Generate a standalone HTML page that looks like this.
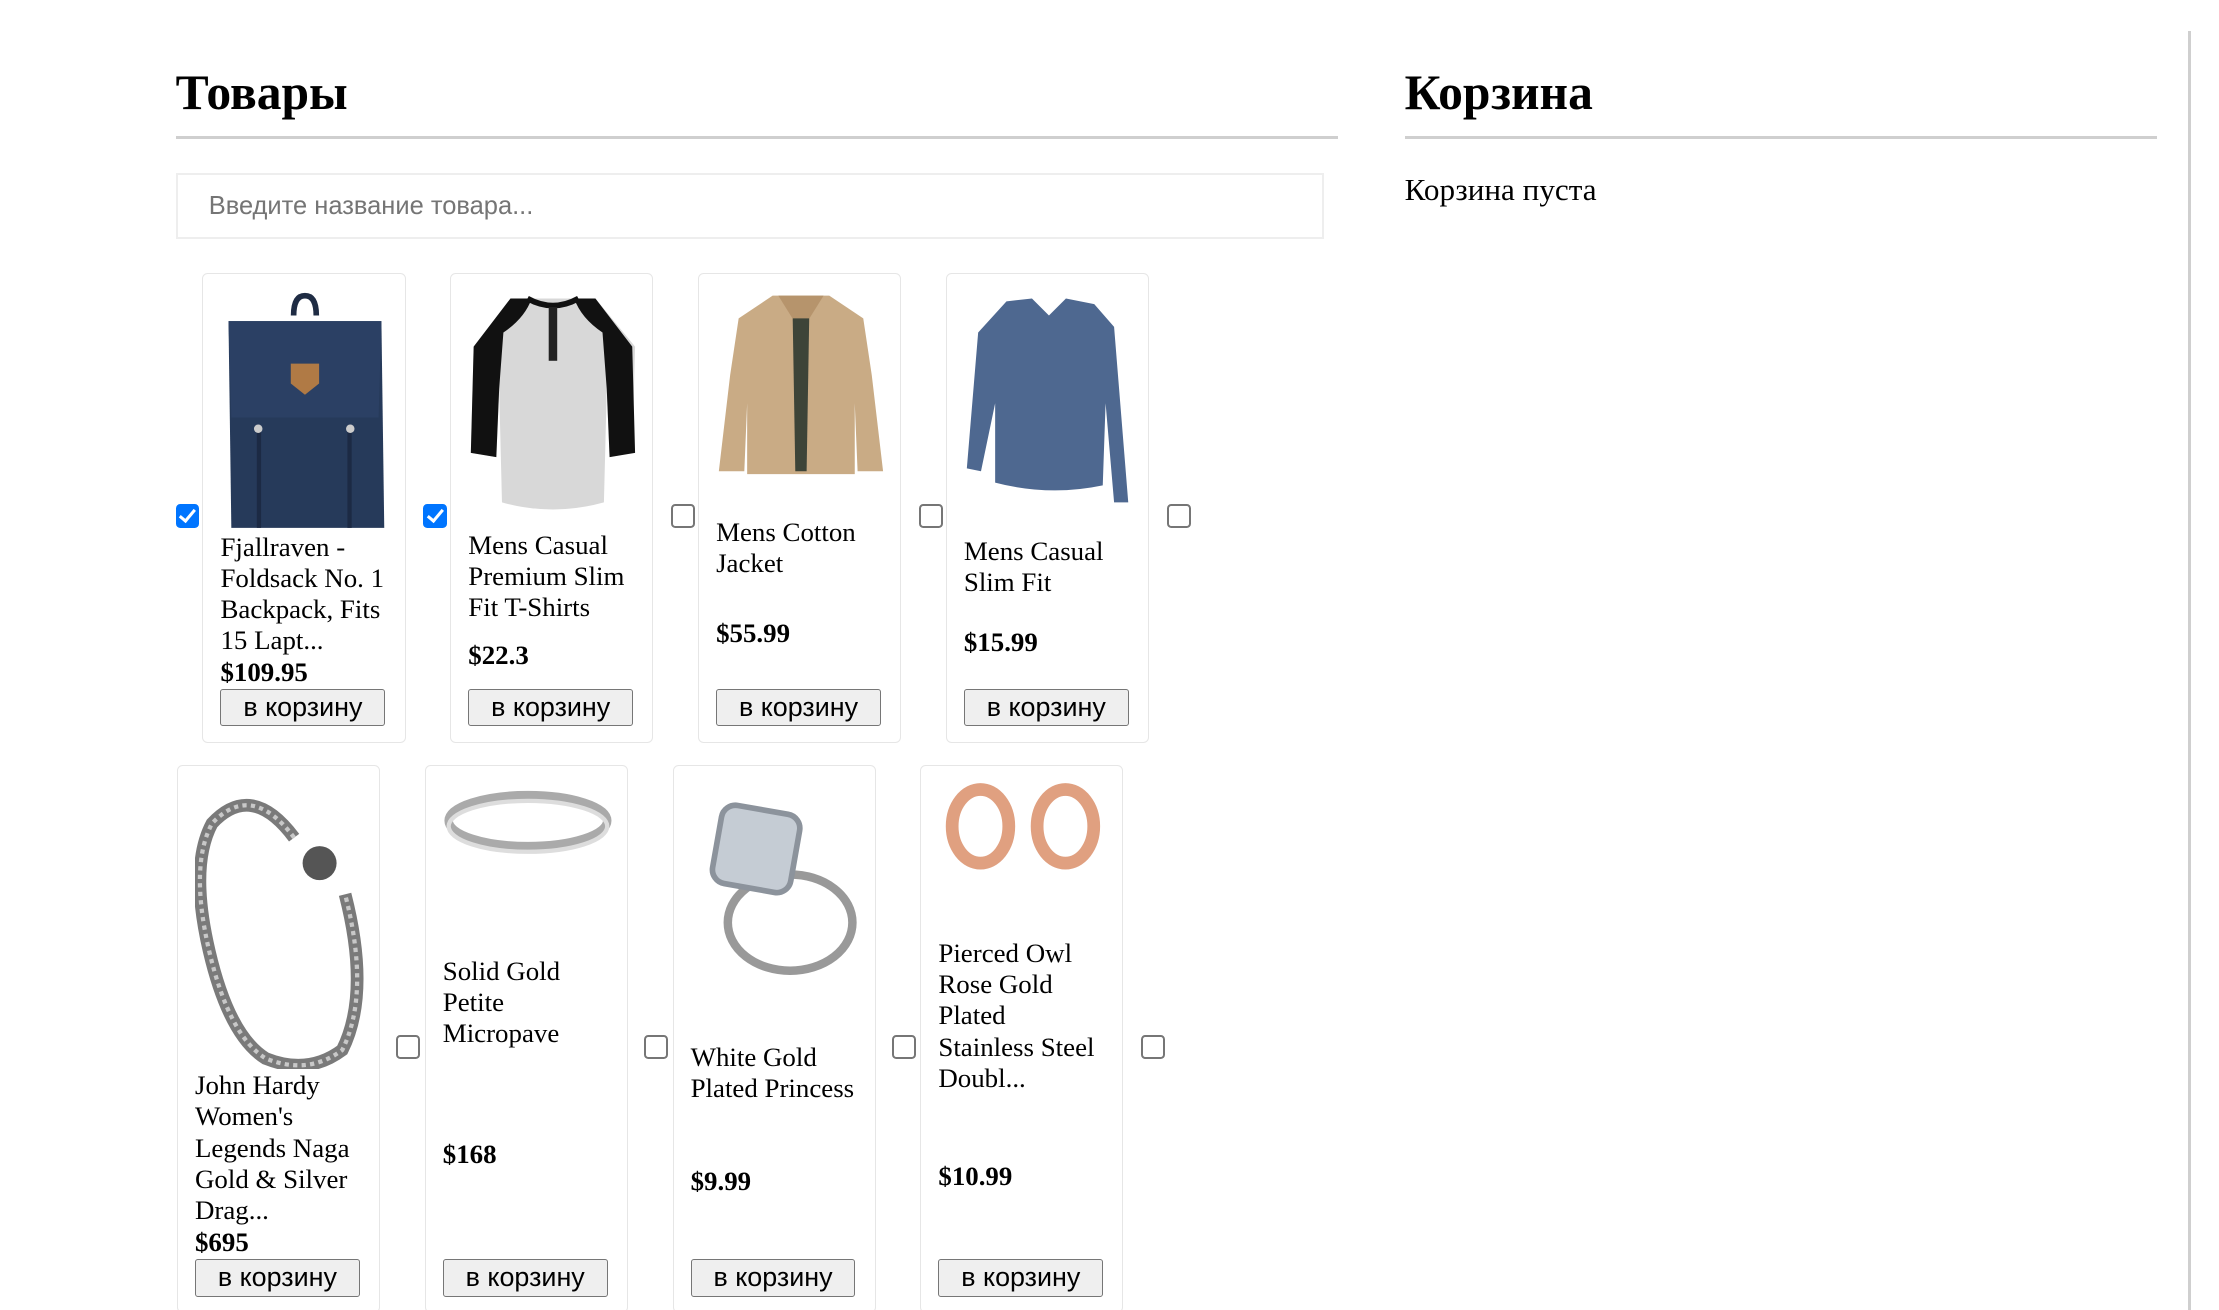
<!DOCTYPE html>
<html><head><meta charset="utf-8"><style>
html,body{margin:0;padding:0;background:#fff;overflow:hidden}
#w{zoom:1.416;position:relative;width:1568px;height:925px;font-family:"Liberation Serif",serif;color:#000}
.a{position:absolute}
h1{position:absolute;margin:0;font-size:35px;font-weight:bold;line-height:40px}
.hr{position:absolute;height:2px;background:#cfcfcf}
.search{left:124px;top:122px;height:44px;border:2px solid #eee;font-family:"Liberation Sans",sans-serif;font-size:18px;color:#757575;line-height:44px;padding-left:22px;width:786px}
.card{position:absolute;width:118px;padding:11px 12px;border:1px solid #e6e6e6;border-radius:4px;display:flex;flex-direction:column;justify-content:space-between}
.card svg{display:block;width:120px}
.t{font-size:19px;line-height:22px}
.p{font-size:19px;font-weight:bold;line-height:21px}
.btn{width:115px;height:25px;border:1px solid #767676;border-radius:2px;background:#efefef;font-family:"Liberation Sans",sans-serif;font-size:19px;line-height:25px;text-align:center}
.cb{position:absolute;width:14px;height:14px;border:1.5px solid #767676;border-radius:3px;background:#fff}
.cb.on{background:#0075ff;border-color:#0075ff}
.cb.on::after{content:"";position:absolute;left:4px;top:0px;width:4px;height:9px;border:solid #fff;border-width:0 2.5px 2.5px 0;transform:rotate(40deg)}
</style></head><body><div id="w">
<h1 style="left:124px;top:46px">Товары</h1>
<div class="hr" style="left:124px;top:96px;width:821px"></div>
<div class="a search">Введите название товара...</div>

<h1 style="left:992px;top:46px">Корзина</h1>
<div class="hr" style="left:992px;top:96px;width:531px"></div>
<div class="a" style="left:992px;top:120px;font-size:22px;line-height:28px">Корзина пуста</div>
<div class="a" style="left:1545px;top:22px;width:2px;height:905px;background:#cfcfcf"></div>

<div class="cb on" style="left:124px;top:356px"></div>
<div class="card" style="left:143px;top:193px;height:308px">
<svg viewBox="0 0 120 170" height="170"><path d="M52 18 q0-14 8-14 q8 0 8 14" fill="none" stroke="#1f2c44" stroke-width="4"/><path d="M6 22 L114 22 L116 168 L8 168 Z" fill="#263a5a"/><path d="M6 22 L114 22 L112 90 L8 90Z" fill="#2b4064"/><path d="M50 52 h20 v14 l-10 8 l-10-8z" fill="#b07a45"/><rect x="26" y="98" width="3" height="70" fill="#1c2a44"/><rect x="90" y="98" width="3" height="70" fill="#1c2a44"/><circle cx="27" cy="98" r="3" fill="#ccc"/><circle cx="92" cy="98" r="3" fill="#ccc"/></svg>
<div class="t">Fjallraven - Foldsack No. 1 Backpack, Fits 15 Lapt...</div>
<div class="p">$109.95</div><div class="btn">в корзину</div></div>

<div class="cb on" style="left:299px;top:356px"></div>
<div class="card" style="left:318px;top:193px;height:308px">
<svg viewBox="0 0 120 157" height="157"><path d="M30 6 L90 6 L118 40 L116 115 L100 118 L98 70 L96 150 Q60 160 24 150 L22 70 L20 118 L2 115 L4 40 Z" fill="#d8d8d8"/><path d="M30 6 L45 6 Q40 20 25 30 L22 70 L20 118 L2 115 L4 40Z" fill="#111"/><path d="M90 6 L75 6 Q80 20 95 30 L98 70 L100 118 L118 115 L116 40Z" fill="#111"/><path d="M42 6 Q60 16 78 6" fill="none" stroke="#111" stroke-width="4"/><rect x="57" y="12" width="6" height="38" fill="#222"/></svg>
<div class="t">Mens Casual Premium Slim Fit T-Shirts</div>
<div class="p">$22.3</div><div class="btn">в корзину</div></div>

<div class="cb" style="left:474px;top:356px"></div>
<div class="card" style="left:493px;top:193px;height:308px">
<svg viewBox="0 0 120 132" height="132"><path d="M40 4 L80 4 L104 20 L110 60 L118 128 L100 128 L98 80 L98 130 L22 130 L22 80 L20 128 L2 128 L10 60 L16 20 Z" fill="#c9ab85"/><path d="M54 10 L66 10 L64 128 L56 128Z" fill="#3d4438"/><path d="M44 4 L54 20 L66 20 L76 4" fill="#b6946c"/></svg>
<div class="t">Mens Cotton Jacket</div>
<div class="p">$55.99</div><div class="btn">в корзину</div></div>

<div class="cb" style="left:649px;top:356px"></div>
<div class="card" style="left:668px;top:193px;height:308px">
<svg viewBox="0 0 120 152" height="152"><path d="M30 8 L48 6 L60 18 L72 6 L92 10 L106 26 L116 150 L106 150 L100 80 L98 138 Q60 146 22 136 L22 80 L12 128 L2 126 L10 30 Z" fill="#4e6890"/></svg>
<div class="t">Mens Casual Slim Fit</div>
<div class="p">$15.99</div><div class="btn">в корзину</div></div>
<div class="cb" style="left:824px;top:356px"></div>

<div class="card" style="left:125px;top:540px;height:364px">
<svg viewBox="0 0 120 203" height="203"><path d="M70 40 Q40 0 12 30 Q-4 60 10 120 Q24 180 50 196 Q80 208 104 190 Q124 150 106 80" fill="none" stroke="#7a7a7a" stroke-width="9"/><path d="M70 40 Q40 0 12 30 Q-4 60 10 120 Q24 180 50 196 Q80 208 104 190 Q124 150 106 80" fill="none" stroke="#c8c8c8" stroke-width="3" stroke-dasharray="3 3"/><circle cx="88" cy="58" r="12" fill="#555"/></svg>
<div class="t">John Hardy Women's Legends Naga Gold &amp; Silver Drag...</div>
<div class="p">$695</div><div class="btn">в корзину</div></div>
<div class="cb" style="left:280px;top:731px"></div>

<div class="card" style="left:300px;top:540px;height:364px">
<svg viewBox="0 0 120 60" height="60"><ellipse cx="60" cy="28" rx="56" ry="18" fill="none" stroke="#aaa" stroke-width="6"/><ellipse cx="60" cy="32" rx="56" ry="18" fill="none" stroke="#ddd" stroke-width="3"/></svg>
<div class="t">Solid Gold Petite Micropave</div>
<div class="p">$168</div><div class="btn">в корзину</div></div>
<div class="cb" style="left:455px;top:731px"></div>

<div class="card" style="left:475px;top:540px;height:364px">
<svg viewBox="0 0 120 140" height="140"><ellipse cx="70" cy="100" rx="44" ry="34" fill="none" stroke="#999" stroke-width="6"/><rect x="18" y="20" width="56" height="56" rx="10" transform="rotate(10 46 48)" fill="#c5ccd4" stroke="#8c939c" stroke-width="4"/></svg>
<div class="t">White Gold Plated Princess</div>
<div class="p">$9.99</div><div class="btn">в корзину</div></div>
<div class="cb" style="left:630px;top:731px"></div>

<div class="card" style="left:650px;top:540px;height:364px">
<svg viewBox="0 0 120 63" height="63"><ellipse cx="30" cy="32" rx="20" ry="26" fill="none" stroke="#e0a080" stroke-width="9"/><ellipse cx="90" cy="32" rx="20" ry="26" fill="none" stroke="#e0a080" stroke-width="9"/></svg>
<div class="t">Pierced Owl Rose Gold Plated Stainless Steel Doubl...</div>
<div class="p">$10.99</div><div class="btn">в корзину</div></div>
<div class="cb" style="left:806px;top:731px"></div>
</div></body></html>
